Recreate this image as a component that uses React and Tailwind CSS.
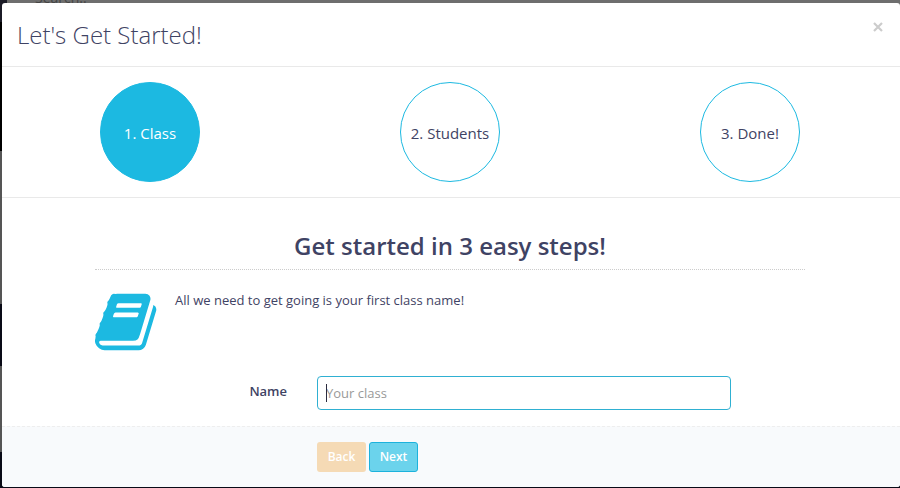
import React from "react";

const steps = ["1. Class", "2. Students", "3. Done!"];

function BookIcon() {
  return (
    <svg viewBox="0 0 1792 1792" className="size-[66px] shrink-0 fill-[#1cb9e1]" aria-hidden="true">
      <path d="M1639 478q40 57 18 129l-275 906q-19 64-76.5 107.5t-122.5 43.5h-923q-77 0-148.5-53.5t-99.5-131.5q-24-67-2-127 0-4 3-27t4-37q1-8-3-21.5t-3-19.5q2-11 8-21t16.5-23.5 16.5-23.5q23-38 45-91.5t30-91.5q3-10 .5-30t-.5-28q3-11 17-28t17-23q21-36 42-92t25-90q1-9-2.5-32t.5-28q4-13 22-30.5t22-22.5q19-26 42.5-84.5t27.5-96.5q1-8-3-25.5t-2-26.5q2-8 9-18t18-23 17-21q8-12 16.5-30.5t15-35 16-36 19.5-32 26.5-23.5 36-11.5 47.5 5.5l-1 3q38-9 51-9h761q74 0 114 56t18 130l-274 906q-36 119-71.5 153.5t-128.5 34.5h-869q-27 0-38 15-11 16-1 43 24 70 144 70h923q29 0 56-15.500t35-41.500l300-987q7-22 5-57 38 15 59 43zm-1064 2q-4 13 2 22.500t20 9.500h608q13 0 25.500-9.500t16.500-22.500l21-64q4-13-2-22.500t-20-9.500h-608q-13 0-25.500 9.500t-16.500 22.500zm-83 256q-4 13 2 22.500t20 9.500h608q13 0 25.500-9.500t16.500-22.500l21-64q4-13-2-22.500t-20-9.500h-608q-13 0-25.500 9.500t-16.500 22.500z" />
    </svg>
  );
}

function Backdrop() {
  return (
    <div className="absolute inset-0 -z-10 flex flex-col overflow-hidden bg-[#090a16]">
      <div className="flex h-[22px] shrink-0 bg-[#6e6e6e]">
        <div className="w-[7px] bg-[#1b1b26]" />
        <span className="-mt-3 pl-7 text-sm leading-5 text-[#444444]">Search..</span>
      </div>
      <div className="h-[129px] shrink-0 bg-black" />
      <div className="h-[153px] shrink-0 bg-[#555555]" />
      <div className="h-[62px] shrink-0 bg-[#090a16]" />
      <div className="h-[86px] shrink-0 bg-[#555555]" />
    </div>
  );
}

export default function App() {
  return (
    <div className="relative isolate min-h-screen pt-[3px] pb-px pl-0.5 font-['Open_Sans',sans-serif] text-[13px] text-[#3f4364]">
      <Backdrop />
      <div role="dialog" aria-labelledby="title" className="overflow-hidden rounded-[3px] bg-white">
        <header className="flex h-16 items-start justify-between border-b border-[#e9e9e9] px-[15px] pt-[15px]">
          <h1 id="title" className="text-2xl leading-[34px] font-light">Let's Get Started!</h1>
          <button type="button" aria-label="Close" className="flex h-[18px] w-[14px] items-center justify-center text-[#cccccc]">
            <svg viewBox="0 0 10 10" className="size-2.5" fill="none" stroke="currentColor" strokeWidth="2.2">
              <path d="M1 1l8 8M9 1L1 9" />
            </svg>
          </button>
        </header>

        <div className="border-b border-[#e9e9e9] py-[15px]">
          <ol className="-ml-0.5 grid grid-cols-3 justify-items-center">
            {steps.map((step, i) => (
              <li
                key={step}
                aria-current={i === 0 ? "step" : undefined}
                className={
                  "flex size-[100px] items-center justify-center rounded-full border border-[#1cb9e1] pt-0.5 text-[15px] " +
                  (i === 0 ? "bg-[#1cb9e1] text-white" : "")
                }
              >
                {step}
              </li>
            ))}
          </ol>
        </div>

        <form>
          <div className="pt-[31px] pr-[95px] pb-4 pl-[93px]">
            <h2 className="border-b border-dotted border-[#cccccc] pb-1.5 text-center text-2xl leading-[34px] font-semibold">
              Get started in 3 easy steps!
            </h2>
            <div className="flex gap-[14px] pt-[19px]">
              <BookIcon />
              <p className="pt-px leading-5">All we need to get going is your first class name!</p>
            </div>
            <div className="flex items-start pt-[21px]">
              <label htmlFor="class-name" className="w-[222px] shrink-0 pt-[5px] pr-[30px] text-right leading-5 font-semibold">
                Name
              </label>
              <div className="relative mr-[74px] min-w-0 flex-1">
                <input
                  id="class-name"
                  autoFocus
                  placeholder="Your class"
                  className="block h-[34px] w-full rounded-[4px] border border-[#2fb0d2] bg-white px-2 caret-transparent outline-none placeholder:text-[#999999]"
                />
                <span aria-hidden="true" className="absolute top-2 left-[9px] h-[18px] w-px bg-[#2b2b3f]" />
              </div>
            </div>
          </div>
          <footer className="flex h-[61px] gap-[3px] border-t border-dashed border-[#eeeeee] bg-[#f8fafc] pt-[15px] pl-[315px] text-xs font-semibold text-white">
            <button type="button" disabled className="h-[30px] w-[49px] rounded-[3px] bg-[#f5dab5]">
              Back
            </button>
            <button type="submit" className="h-[30px] w-[49px] rounded-[3px] border border-[#1cb2dc] bg-[#6bd3ec]">
              Next
            </button>
          </footer>
        </form>
      </div>
    </div>
  );
}
